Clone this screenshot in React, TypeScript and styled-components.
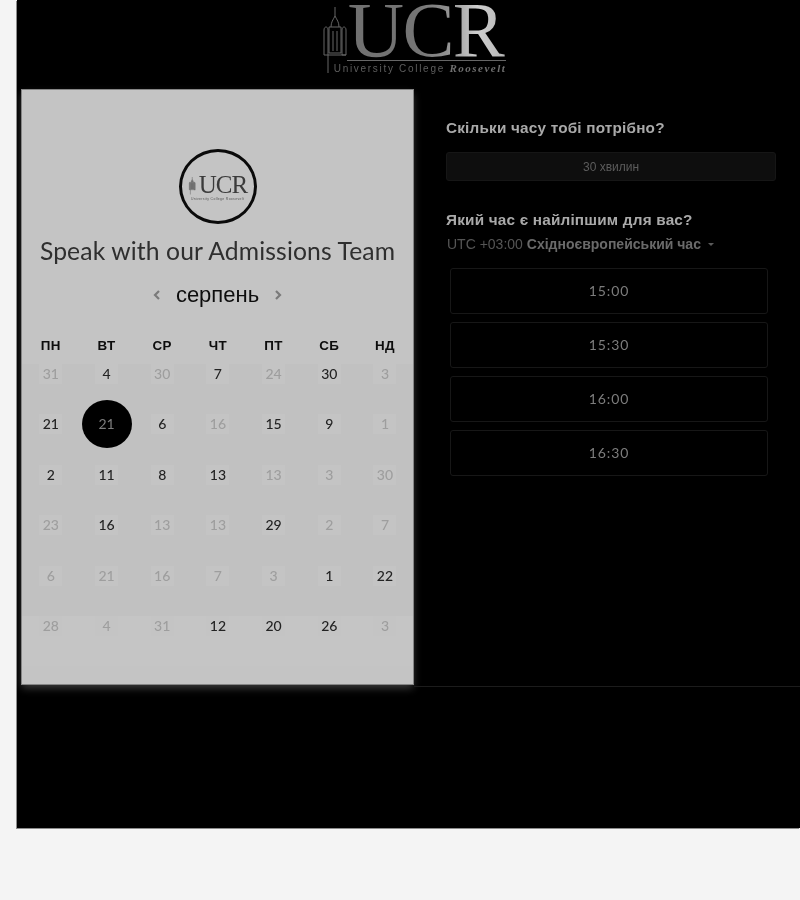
import React from "react";
import styled, { createGlobalStyle } from "styled-components";

const Global = createGlobalStyle`
  html, body { margin: 0; padding: 0; background: #f4f4f4; }
  body { font-family: "Liberation Sans", Arial, sans-serif; }
`;

const Page = styled.div`
  width: 800px;
  height: 900px;
  overflow: hidden;
  padding-left: 17px;
  box-sizing: border-box;
`;
const Stage = styled.div`
  height: 828px;
  background: #000;
  box-shadow: -1px 1px 0 #8c8c8c;
  display: flex;
  flex-direction: column;
  filter: grayscale(1) blur(0.35px);
`;
const Header = styled.header`
  height: 89px;
  flex: none;
  display: flex;
  justify-content: center;
  padding-left: 12px;
`;
const HeaderBrand = styled.div`
  display: flex;
  align-items: flex-start;
`;
const TowerBig = styled.svg`
  width: 26px;
  height: 68px;
  margin-top: 7px;
  flex: none;
`;
const BrandText = styled.div`
  display: flex;
  flex-direction: column;
  margin-left: -2px;
`;
const BrandLetters = styled.div`
  font-family: "Liberation Serif", serif;
  font-size: 78px;
  line-height: 60px;
  height: 60px;
  letter-spacing: -1.6px;
  padding-left: 1px;
  background: linear-gradient(90deg, #707070 0%, #757575 45%, #8e8e8e 62%, #cfcfcf 82%, #b5b5b5 100%);
  -webkit-background-clip: text;
  background-clip: text;
  color: transparent;
  border-bottom: 1px solid #666;
`;
const BrandCaption = styled.div`
  font-family: "Liberation Sans", sans-serif;
  font-size: 10px;
  letter-spacing: 1.7px;
  color: #5e5e5e;
  margin: 1px 0 0 -13px;
  white-space: nowrap;
  line-height: 13px;
`;
const BrandItalic = styled.span`
  font-family: "Liberation Serif", serif;
  font-style: italic;
  font-weight: 700;
  font-size: 11px;
  color: #707070;
  letter-spacing: 1.5px;
`;

const Main = styled.main`
  display: flex;
  height: 598px;
  flex: none;
`;
const Card = styled.section`
  width: 393px;
  height: 596px;
  margin-left: 4px;
  flex: none;
  background: #c4c4c4;
  box-shadow: inset 0 0 0 1px #858585, 0 4px 8px -1px rgba(255, 255, 255, 0.24);
  display: flex;
  flex-direction: column;
  align-items: center;
  padding: 60px 1px 0;
  box-sizing: border-box;
`;
const Avatar = styled.div`
  width: 78px;
  height: 75px;
  box-sizing: border-box;
  border: 3px solid #0a0a0a;
  border-radius: 50%;
  display: flex;
  flex-direction: column;
  align-items: center;
  justify-content: center;
`;
const AvatarRow = styled.div`
  display: flex;
  align-items: flex-end;
  gap: 2px;
`;
const TowerSmall = styled.svg`
  width: 9px;
  height: 18px;
  flex: none;
  margin-bottom: 2px;
`;
const AvatarLetters = styled.div`
  font-family: "Liberation Serif", serif;
  font-size: 25px;
  line-height: 24px;
  letter-spacing: -1px;
  color: #3b3b3b;
`;
const AvatarCaption = styled.div`
  font-size: 3.4px;
  line-height: 4px;
  color: #555;
  white-space: nowrap;
  letter-spacing: 0.35px;
`;
const Title = styled.h1`
  margin: 12px 0 0;
  font-family: Lato, sans-serif;
  font-weight: 400;
  font-size: 24.7px;
  line-height: 30px;
  color: #2f2f2f;
  white-space: nowrap;
  letter-spacing: 0.12px;
`;
const MonthNav = styled.div`
  margin-top: 14px;
  height: 30px;
  display: flex;
  align-items: center;
  gap: 14px;
`;
const Month = styled.div`
  font-size: 22px;
  line-height: 30px;
  color: #0d0d0d;
`;
const Chevron = styled.svg`
  width: 10px;
  height: 12px;
  color: #7a7a7a;
  flex: none;
`;
const Weekdays = styled.div`
  margin-top: 26px;
  width: 100%;
  padding: 0 1px;
  box-sizing: border-box;
  display: grid;
  grid-template-columns: repeat(7, 55.7px);
`;
const Weekday = styled.div`
  height: 20px;
  line-height: 20px;
  text-align: center;
  font-weight: 700;
  font-size: 13.4px;
  letter-spacing: 0.4px;
  color: #0d0d0d;
`;
const DaysGrid = styled.div`
  margin-top: 8px;
  width: 100%;
  padding: 0 1px;
  box-sizing: border-box;
  display: grid;
  grid-template-columns: repeat(7, 55.7px);
  grid-auto-rows: 50.4px;
  background: linear-gradient(#c1c1c1 0, #c1c1c1 252px, #c5c5c5 252px);
`;
const DayCell = styled.div`
  display: flex;
  justify-content: center;
  align-items: flex-start;
`;
const DayNumber = styled.span<{ $dim: boolean; $selected: boolean }>`
  position: relative;
  z-index: 0;
  min-width: 21px;
  padding: 0 1px;
  text-align: center;
  font-family: Lato, sans-serif;
  font-size: 14px;
  line-height: 20px;
  font-weight: ${(p) => (p.$selected ? 400 : 500)};
  color: ${(p) => (p.$selected ? "#7d7d7d" : p.$dim ? "#9e9e9e" : "#232323")};
  background: ${(p) => (p.$selected ? "transparent" : "#c4c4c4")};
  ${(p) =>
    p.$selected
      ? `&::before {
          content: "";
          position: absolute;
          z-index: -1;
          left: 50%;
          top: 50%;
          width: 50px;
          height: 48px;
          transform: translate(-50%, -50%);
          border-radius: 50%;
          background: #000;
        }`
      : ""}
`;

const Side = styled.section`
  flex: 1;
  min-width: 0;
  padding: 30px 24px 0 32px;
  border-bottom: 1px solid #1c1c1c;
`;
const Question = styled.h2`
  margin: 0;
  font-size: 15.3px;
  line-height: 18px;
  font-weight: 700;
  color: #a9a9a9;
  white-space: nowrap;
  letter-spacing: 0.2px;
`;
const Duration = styled.div`
  margin-top: 15px;
  height: 29px;
  box-sizing: border-box;
  background: #0e0e0e;
  border: 1px solid #161616;
  border-radius: 3px;
  display: flex;
  align-items: center;
  justify-content: center;
  font-size: 12px;
  color: #5c5c5c;
`;
const SecondQuestion = styled(Question)`
  margin-top: 30px;
`;
const Zone = styled.div`
  margin-top: 7px;
  padding-left: 1px;
  display: flex;
  align-items: center;
  gap: 6px;
  font-size: 14px;
  line-height: 16px;
  color: #555;
  white-space: nowrap;
`;
const ZoneName = styled.span`
  font-weight: 700;
  color: #6a6a6a;
`;
const Caret = styled.span`
  width: 0;
  height: 0;
  border-left: 3px solid transparent;
  border-right: 3px solid transparent;
  border-top: 3px solid #5a5a5a;
  margin-left: 1px;
`;
const Slots = styled.div`
  margin: 16px 8px 0 4px;
  display: flex;
  flex-direction: column;
  gap: 8px;
`;
const Slot = styled.div`
  height: 46px;
  box-sizing: border-box;
  border: 1px solid #171717;
  border-radius: 3px;
  padding-bottom: 2px;
  display: flex;
  align-items: center;
  justify-content: center;
  font-family: Lato, sans-serif;
  font-size: 14px;
  letter-spacing: 0.9px;
  color: #7c7c7c;
`;

const towerPaths = (
  <>
    <path d="M12 0V9M8 20C8 15 10 13 12 9C14 13 16 15 16 20" />
    <path d="M6 20H18V46H6Z" />
    <path d="M1 23C1 19 5 19 5 23V48H1Z" />
    <path d="M19 23C19 19 23 19 23 23V48H19Z" />
    <path d="M10 24V44M14 24V44" />
    <path d="M5 48V66" />
    <path d="M5 48H23" />
  </>
);

const weekdays = ["ПН", "ВТ", "СР", "ЧТ", "ПТ", "СБ", "НД"];
type D = [string, boolean];
const a = (n: string): D => [n, true];
const d = (n: string): D => [n, false];
const rows: D[][] = [
  [d("31"), a("4"), d("30"), a("7"), d("24"), a("30"), d("3")],
  [a("21"), a("21"), a("6"), d("16"), a("15"), a("9"), d("1")],
  [a("2"), a("11"), a("8"), a("13"), d("13"), d("3"), d("30")],
  [d("23"), a("16"), d("13"), d("13"), a("29"), d("2"), d("7")],
  [d("6"), d("21"), d("16"), d("7"), d("3"), a("1"), a("22")],
  [d("28"), d("4"), d("31"), a("12"), a("20"), a("26"), d("3")],
];
const slots = ["15:00", "15:30", "16:00", "16:30"];

export default function App() {
  return (
    <Page>
      <Global />
      <Stage>
        <Header>
          <HeaderBrand>
            <TowerBig viewBox="0 0 26 68" fill="none" stroke="#666" strokeWidth="1">
              {towerPaths}
            </TowerBig>
            <BrandText>
              <BrandLetters>UCR</BrandLetters>
              <BrandCaption>
                University College <BrandItalic>Roosevelt</BrandItalic>
              </BrandCaption>
            </BrandText>
          </HeaderBrand>
        </Header>
        <Main>
          <Card>
            <Avatar>
              <AvatarRow>
                <TowerSmall viewBox="0 0 26 68" fill="#777" stroke="#666" strokeWidth="2">
                  {towerPaths}
                </TowerSmall>
                <AvatarLetters>UCR</AvatarLetters>
              </AvatarRow>
              <AvatarCaption>University College Roosevelt</AvatarCaption>
            </Avatar>
            <Title>Speak with our Admissions Team</Title>
            <MonthNav>
              <Chevron viewBox="0 0 10 12" fill="none" stroke="currentColor" strokeWidth="2.2">
                <path d="M7 2L3 6L7 10" />
              </Chevron>
              <Month>серпень</Month>
              <Chevron viewBox="0 0 10 12" fill="none" stroke="currentColor" strokeWidth="2.2">
                <path d="M3 2L7 6L3 10" />
              </Chevron>
            </MonthNav>
            <Weekdays>
              {weekdays.map((w) => (
                <Weekday key={w}>{w}</Weekday>
              ))}
            </Weekdays>
            <DaysGrid>
              {rows.flatMap((row, r) =>
                row.map(([n, active], c) => (
                  <DayCell key={`${r}-${c}`}>
                    <DayNumber $dim={!active} $selected={r === 1 && c === 1}>
                      {n}
                    </DayNumber>
                  </DayCell>
                ))
              )}
            </DaysGrid>
          </Card>
          <Side>
            <Question>Скільки часу тобі потрібно?</Question>
            <Duration>30 хвилин</Duration>
            <SecondQuestion>Який час є найліпшим для вас?</SecondQuestion>
            <Zone>
              <span>
                UTC +03:00 <ZoneName>Східноєвропейський час</ZoneName>
              </span>
              <Caret />
            </Zone>
            <Slots>
              {slots.map((s) => (
                <Slot key={s}>{s}</Slot>
              ))}
            </Slots>
          </Side>
        </Main>
      </Stage>
    </Page>
  );
}
